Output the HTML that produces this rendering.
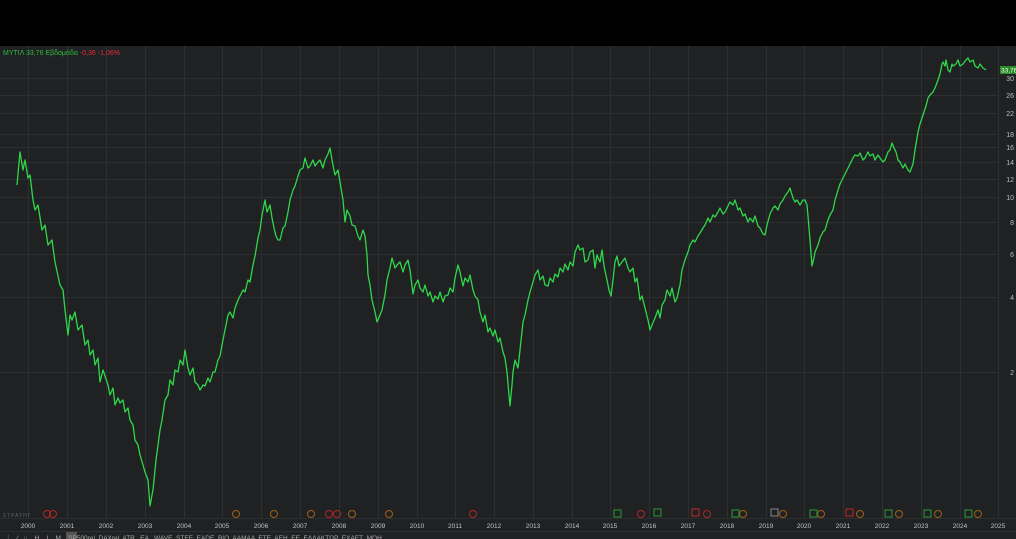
<!DOCTYPE html>
<html><head><meta charset="utf-8"><style>
html,body{margin:0;padding:0;background:#000;width:1016px;height:539px;overflow:hidden;font-family:"Liberation Sans","DejaVu Sans",sans-serif}
svg{display:block}
</style></head><body>
<svg width="1016" height="539" xmlns="http://www.w3.org/2000/svg" font-family="Liberation Sans, DejaVu Sans, sans-serif">
<rect x="0" y="0" width="1016" height="46" fill="#000"/>
<rect x="0" y="46" width="1016" height="493" fill="#1f2123"/>
<g stroke="#2c2f32" stroke-width="1">
<line x1="28.5" y1="46" x2="28.5" y2="518"/><line x1="67.5" y1="46" x2="67.5" y2="518"/><line x1="106.5" y1="46" x2="106.5" y2="518"/><line x1="145.5" y1="46" x2="145.5" y2="518"/><line x1="184.5" y1="46" x2="184.5" y2="518"/><line x1="222.5" y1="46" x2="222.5" y2="518"/><line x1="261.5" y1="46" x2="261.5" y2="518"/><line x1="300.5" y1="46" x2="300.5" y2="518"/><line x1="339.5" y1="46" x2="339.5" y2="518"/><line x1="378.5" y1="46" x2="378.5" y2="518"/><line x1="417.5" y1="46" x2="417.5" y2="518"/><line x1="455.5" y1="46" x2="455.5" y2="518"/><line x1="494.5" y1="46" x2="494.5" y2="518"/><line x1="533.5" y1="46" x2="533.5" y2="518"/><line x1="572.5" y1="46" x2="572.5" y2="518"/><line x1="610.5" y1="46" x2="610.5" y2="518"/><line x1="649.5" y1="46" x2="649.5" y2="518"/><line x1="688.5" y1="46" x2="688.5" y2="518"/><line x1="727.5" y1="46" x2="727.5" y2="518"/><line x1="766.5" y1="46" x2="766.5" y2="518"/><line x1="804.5" y1="46" x2="804.5" y2="518"/><line x1="843.5" y1="46" x2="843.5" y2="518"/><line x1="882.5" y1="46" x2="882.5" y2="518"/><line x1="921.5" y1="46" x2="921.5" y2="518"/><line x1="960.5" y1="46" x2="960.5" y2="518"/><line x1="998.5" y1="46" x2="998.5" y2="518"/>
<line x1="0" y1="78.5" x2="998" y2="78.5"/><line x1="0" y1="95.5" x2="998" y2="95.5"/><line x1="0" y1="113.5" x2="998" y2="113.5"/><line x1="0" y1="134.5" x2="998" y2="134.5"/><line x1="0" y1="147.5" x2="998" y2="147.5"/><line x1="0" y1="162.5" x2="998" y2="162.5"/><line x1="0" y1="179.5" x2="998" y2="179.5"/><line x1="0" y1="197.5" x2="998" y2="197.5"/><line x1="0" y1="222.5" x2="998" y2="222.5"/><line x1="0" y1="254.5" x2="998" y2="254.5"/><line x1="0" y1="297.5" x2="998" y2="297.5"/><line x1="0" y1="372.5" x2="998" y2="372.5"/>
<line x1="0" y1="518.5" x2="1016" y2="518.5"/><line x1="0" y1="531.5" x2="1016" y2="531.5"/>
</g>
<g fill="#b8bcc0" font-size="7" text-anchor="end">
<text x="1014" y="81">30</text><text x="1014" y="98">26</text><text x="1014" y="116">22</text><text x="1014" y="137">18</text><text x="1014" y="150">16</text><text x="1014" y="165">14</text><text x="1014" y="182">12</text><text x="1014" y="200">10</text><text x="1014" y="225">8</text><text x="1014" y="257">6</text><text x="1014" y="300">4</text><text x="1014" y="375">2</text>
</g>
<rect x="1000" y="66" width="16" height="8" fill="#2a8a2a"/>
<text x="1001" y="72.5" font-size="6.5" fill="#e8ffe8">33,76</text>
<text x="3" y="55" font-size="7" fill="#2fbf3f">ΜΥΤΙΛ 33,76 Εβδομάδα <tspan fill="#e0303a">-0,36 -1,06%</tspan></text>
<polyline fill="none" stroke="#2fd84a" stroke-width="1.3" stroke-linejoin="round" points="17,185 20,152 23,170 25,160 28,178 30,175 33,200 35,210 38,205 42,230 45,225 48,245 52,240 55,262 60,285 63,290 65,310 68,335 70,315 72,320 75,312 78,330 82,325 85,345 88,340 90,355 93,350 95,365 98,358 100,382 103,370 105,376 108,385 110,395 113,388 115,405 118,398 120,403 123,400 125,412 128,408 130,420 133,425 135,440 138,445 140,455 143,465 145,472 148,480 150,506 152,495 153,490 155,470 156,460 158,445 160,430 162,420 165,400 168,395 170,380 173,385 175,370 178,372 180,360 183,365 185,350 188,368 190,375 193,368 195,382 198,385 200,390 203,385 205,386 208,378 210,382 213,372 215,372 218,360 220,356 223,340 225,330 228,315 230,312 233,318 235,308 238,300 240,296 243,290 245,292 248,280 250,282 253,265 255,256 258,238 260,230 262,215 265,200 267,212 268,210 270,205 272,218 274,228 276,236 278,240 280,240 283,228 285,226 288,212 290,200 293,190 295,186 298,176 300,170 303,168 305,158 308,168 310,166 313,160 315,166 318,162 320,160 323,168 325,160 328,154 330,148 332,160 335,175 338,170 340,182 343,200 345,222 347,210 350,216 352,225 355,226 358,236 360,240 363,230 365,236 367,255 368,275 370,285 372,300 375,312 377,322 380,315 382,310 385,295 387,280 390,268 392,258 395,268 397,265 400,262 403,272 405,265 408,260 410,270 413,294 415,285 418,280 420,288 423,292 425,285 428,296 430,292 433,302 435,296 438,299 440,292 443,302 445,296 448,295 450,288 453,292 455,278 458,265 460,272 463,286 465,278 468,282 470,275 473,290 475,296 478,300 480,312 483,322 485,315 488,332 490,328 493,336 495,330 498,342 500,338 503,352 505,358 507,372 509,395 510,406 512,385 513,372 515,360 518,368 520,350 523,322 525,315 528,300 530,292 533,282 535,275 538,270 540,280 543,276 545,285 548,286 550,278 553,282 555,274 558,277 560,268 563,272 565,264 568,270 570,262 573,266 575,252 578,245 580,250 583,248 585,262 588,260 590,252 593,250 595,268 597,255 600,262 602,250 604,266 607,280 609,290 611,296 613,280 615,262 617,256 619,266 622,262 625,258 628,268 630,272 633,268 635,282 637,278 640,300 642,296 645,308 648,320 650,330 652,325 655,318 658,310 660,318 662,305 665,300 667,290 670,296 672,288 675,302 677,298 680,285 682,270 685,260 688,252 690,245 693,240 695,242 698,236 700,233 703,228 705,225 708,218 710,222 713,215 715,217 718,212 720,208 723,214 725,212 728,206 730,202 733,205 735,200 738,210 740,208 743,216 745,214 748,222 750,218 753,222 755,216 758,226 760,228 763,234 765,235 767,225 770,214 773,208 775,206 778,210 780,204 783,200 785,196 788,192 790,188 793,198 795,202 797,200 800,205 803,200 805,200 807,205 808,216 810,240 812,266 814,258 815,252 818,245 820,238 823,232 825,230 828,220 830,215 833,210 835,200 838,190 840,184 843,178 845,174 848,168 850,164 853,158 855,155 858,156 860,153 863,160 865,158 868,152 870,156 873,154 875,160 878,155 880,158 883,162 885,160 888,152 890,150 892,143 894,148 896,152 898,160 900,162 903,168 905,164 908,170 910,172 913,164 915,150 918,132 920,124 922,118 924,112 926,106 928,98 930,95 933,92 935,88 938,80 940,74 942,64 943,62 945,66 946,60 948,70 950,72 952,64 953,66 956,64 958,60 960,66 963,64 966,60 968,58 970,62 973,60 975,66 978,68 980,64 983,68 986,70"/>
<g font-size="5" fill="#999" text-anchor="middle">
<circle cx="47" cy="514" r="3.5" fill="none" stroke="#b02828"/><circle cx="53" cy="514" r="3.5" fill="none" stroke="#b02828"/>
<circle cx="236" cy="514" r="3.5" fill="none" stroke="#a06018"/><circle cx="274" cy="514" r="3.5" fill="none" stroke="#a06018"/><circle cx="311" cy="514" r="3.5" fill="none" stroke="#a06018"/>
<circle cx="329" cy="514" r="3.5" fill="none" stroke="#b02828"/><circle cx="337" cy="514" r="3.5" fill="none" stroke="#b02828"/><circle cx="352" cy="514" r="3.5" fill="none" stroke="#a06018"/><circle cx="389" cy="514" r="3.5" fill="none" stroke="#a06018"/><circle cx="473" cy="514" r="3.5" fill="none" stroke="#b02828"/>
<circle cx="641" cy="514" r="3.5" fill="none" stroke="#b02828"/><circle cx="707" cy="514" r="3.5" fill="none" stroke="#b02828"/>
<circle cx="743" cy="514" r="3.5" fill="none" stroke="#a06018"/><circle cx="783" cy="514" r="3.5" fill="none" stroke="#a06018"/><circle cx="821" cy="514" r="3.5" fill="none" stroke="#a06018"/><circle cx="860" cy="514" r="3.5" fill="none" stroke="#a06018"/><circle cx="899" cy="514" r="3.5" fill="none" stroke="#a06018"/><circle cx="938" cy="514" r="3.5" fill="none" stroke="#a06018"/><circle cx="978" cy="514" r="3.5" fill="none" stroke="#a06018"/>
<rect x="614" y="510" width="7" height="7" fill="none" stroke="#2a9a3a"/><rect x="654" y="509" width="7" height="7" fill="none" stroke="#2a9a3a"/><rect x="692" y="509" width="7" height="7" fill="none" stroke="#c02828"/><rect x="732" y="510" width="7" height="7" fill="none" stroke="#2a9a3a"/><rect x="771" y="509" width="7" height="7" fill="none" stroke="#888"/><rect x="810" y="510" width="7" height="7" fill="none" stroke="#2a9a3a"/><rect x="846" y="509" width="7" height="7" fill="none" stroke="#c02828"/><rect x="885" y="510" width="7" height="7" fill="none" stroke="#2a9a3a"/><rect x="924" y="510" width="7" height="7" fill="none" stroke="#2a9a3a"/><rect x="965" y="510" width="7" height="7" fill="none" stroke="#2a9a3a"/>
</g>
<text x="3" y="517" font-size="5" fill="#666" letter-spacing="1">ΣΤΡΑΤΗΓ</text>
<g fill="#c0c4c8" font-size="6.5" text-anchor="middle">
<text x="28" y="528">2000</text><text x="67" y="528">2001</text><text x="106" y="528">2002</text><text x="145" y="528">2003</text><text x="184" y="528">2004</text><text x="222" y="528">2005</text><text x="261" y="528">2006</text><text x="300" y="528">2007</text><text x="339" y="528">2008</text><text x="378" y="528">2009</text><text x="417" y="528">2010</text><text x="455" y="528">2011</text><text x="494" y="528">2012</text><text x="533" y="528">2013</text><text x="572" y="528">2014</text><text x="610" y="528">2015</text><text x="649" y="528">2016</text><text x="688" y="528">2017</text><text x="727" y="528">2018</text><text x="766" y="528">2019</text><text x="804" y="528">2020</text><text x="843" y="528">2021</text><text x="882" y="528">2022</text><text x="921" y="528">2023</text><text x="960" y="528">2024</text><text x="998" y="528">2025</text>
</g>
<rect x="66" y="532" width="11" height="7" fill="#555"/>
<text x="5" y="540" font-size="6.5" fill="#aaa" xml:space="preserve">⋮   ⁄   ○    H    I    M    SP500rel  DAXrel  ATR   EA   WAVE  STEE  EADE  BIO  AAMAA  ETE  AEH  ΕΕ  ΕΛΛΑΚΤΩΡ  ΕΧΑΕΤ  ΜΟΗ</text>
</svg>
</body></html>
